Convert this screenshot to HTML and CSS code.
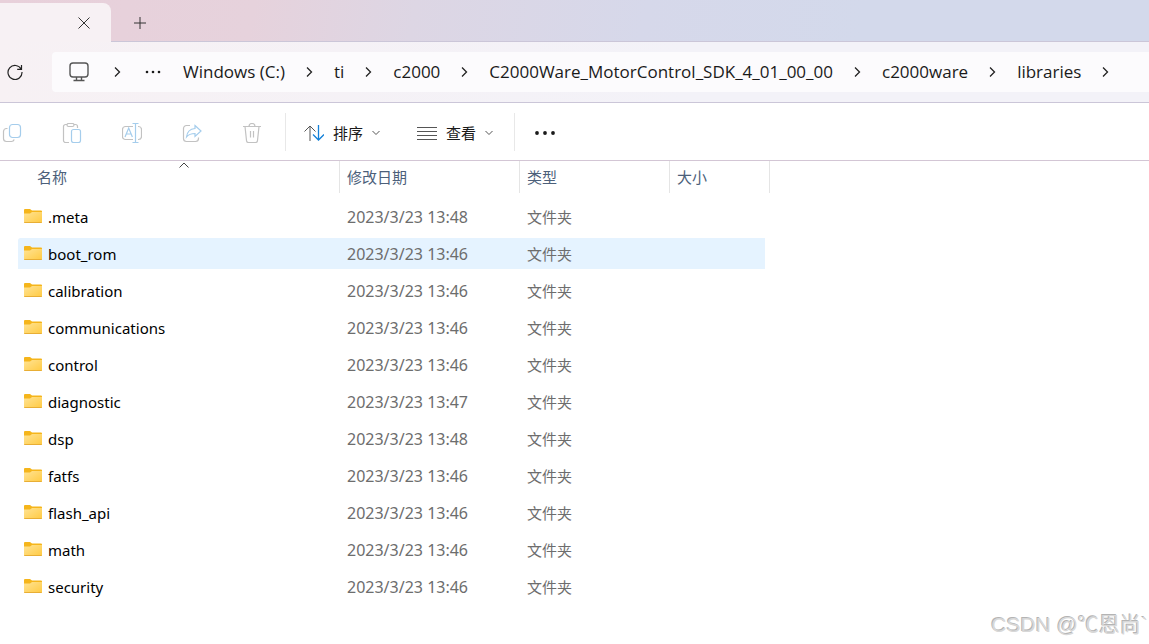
FILE: index.html
```html
<!DOCTYPE html>
<html lang="zh-CN">

<head>
    <meta charset="UTF-8">
    <meta name="viewport" content="width=device-width, initial-scale=1.0">
    <title>libraries</title>
    <link rel="stylesheet" href="styles.css">
</head>

<body>
    <div class="tabs">
        <div class="tab">
            <button class="tab-btn" aria-label="关闭标签页">
                <svg width="12" height="12" viewBox="0 0 12 12"><path d="M.500.500l11 11M11.500.500l-11 11" /></svg>
            </button>
        </div>
        <button class="tab-btn add" aria-label="新建标签页">
            <svg width="12" height="12" viewBox="0 0 12 12"><path d="M6 0v12M0 6h12" /></svg>
        </button>
    </div>

    <div class="nav">
        <button class="refresh" aria-label="刷新">
            <svg width="16" height="16" viewBox="0 0 16 16"><path d="M14.2 5.2A7 7 0 1 0 15 8M14.500 1v4.300h-4.300" /></svg>
        </button>
        <nav class="address">
            <svg class="pc" width="20" height="20" viewBox="0 0 20 20"><rect x="1" y="1" width="18" height="14" rx="3" /><path d="M7.500 15v3M12.500 15v3M4.500 18.500h11" /></svg>
            <svg class="arrow" width="7" height="12" viewBox="0 0 7 12"><path d="M1 1.500L5.500 6 1 10.500" /></svg>
            <button class="more" aria-label="更多位置">
                <svg width="16" height="4" viewBox="0 0 16 4"><circle cx="2" cy="2" r="1.300" /><circle cx="8" cy="2" r="1.300" /><circle cx="14" cy="2" r="1.300" /></svg>
            </button>
            <a href="#">Windows (C:)</a>
            <svg class="arrow" width="7" height="12" viewBox="0 0 7 12"><path d="M1 1.500L5.500 6 1 10.500" /></svg>
            <a href="#">ti</a>
            <svg class="arrow" width="7" height="12" viewBox="0 0 7 12"><path d="M1 1.500L5.500 6 1 10.500" /></svg>
            <a href="#">c2000</a>
            <svg class="arrow" width="7" height="12" viewBox="0 0 7 12"><path d="M1 1.500L5.500 6 1 10.500" /></svg>
            <a href="#">C2000Ware_MotorControl_SDK_4_01_00_00</a>
            <svg class="arrow" width="7" height="12" viewBox="0 0 7 12"><path d="M1 1.500L5.500 6 1 10.500" /></svg>
            <a href="#">c2000ware</a>
            <svg class="arrow" width="7" height="12" viewBox="0 0 7 12"><path d="M1 1.500L5.500 6 1 10.500" /></svg>
            <a href="#">libraries</a>
            <svg class="arrow" width="7" height="12" viewBox="0 0 7 12"><path d="M1 1.500L5.500 6 1 10.500" /></svg>
        </nav>
    </div>

    <div class="toolbar">
        <div class="icons">
            <button disabled aria-label="复制">
                <svg width="20" height="20" viewBox="0 0 20 20"><path class="gray" d="M5.500 5.500H4.500a3 3 0 0 0-3 3v7a3 3 0 0 0 3 3h5a3 3 0 0 0 2.700-2" /><rect class="blue" x="7.500" y="1.500" width="11" height="13" rx="3" /></svg>
            </button>
            <button disabled aria-label="粘贴">
                <svg width="20" height="20" viewBox="0 0 20 20"><path class="gray" d="M7 19.500H3.500a2 2 0 0 1-2-2v-14a2 2 0 0 1 2-2h1.500M12 1.500h1.500a2 2 0 0 1 2 2V5" /><rect class="gray" x="5" y=".500" width="7" height="3" rx="1.500" /><rect class="blue" x="9.500" y="6.500" width="9" height="13" rx="2" /></svg>
            </button>
            <button disabled aria-label="重命名">
                <svg width="20" height="20" viewBox="0 0 20 20"><path class="gray" d="M11 16.500H3.500a3 3 0 0 1-3-3v-7a3 3 0 0 1 3-3H11M16 3.500h.500a3 3 0 0 1 3 3v7a3 3 0 0 1-3 3H16" /><path class="blue" d="M13.500 1v18M10.500.500h6M10.500 19.500h6M3 14l3.700-9 3.700 9M4.300 11h4.800" /></svg>
            </button>
            <button disabled aria-label="共享">
                <svg width="20" height="20" viewBox="0 0 20 20"><path class="gray" d="M8 2.500H4.500a3 3 0 0 0-3 3v10a3 3 0 0 0 3 3h9a3 3 0 0 0 3-3v-1" /><path class="blue" d="M13 2.500l6 5.500-6 5.500v-3c-4 0-6.500 1-8.500 3.500C5 9 8 6 13 5.500z" /></svg>
            </button>
            <button disabled aria-label="删除">
                <svg width="20" height="20" viewBox="0 0 20 20"><path class="gray" d="M1 3.500h18M7 3.500a3 3 0 0 1 6 0M3 3.500l1.500 14a2 2 0 0 0 2 2h7a2 2 0 0 0 2-2l1.500-14M8.500 8v6.500M11.500 8v6.500" /></svg>
            </button>
        </div>
        <button class="menu">
            <svg width="20" height="18" viewBox="0 0 20 18"><path class="dark" d="M6 17V2M.500 7.500L6 2l5.500 5.500" /><path class="accent" d="M14.500 1v15M9 10.500l5.500 5.500 5.500-5.500" /></svg>
            <span>排序</span>
            <svg width="8" height="6" viewBox="0 0 8 6"><path class="dark" d="M.500 1L4 4.500 7.500 1" /></svg>
        </button>
        <button class="menu view">
            <svg width="20" height="14" viewBox="0 0 20 14"><path class="dark" d="M0 1.500h20M0 5.500h20M0 9.500h20M0 13.500h20" /></svg>
            <span>查看</span>
            <svg width="8" height="6" viewBox="0 0 8 6"><path class="dark" d="M.500 1L4 4.500 7.500 1" /></svg>
        </button>
        <button class="dots" aria-label="查看更多">
            <svg width="20" height="4" viewBox="0 0 20 4"><circle cx="2" cy="2" r="1.900" /><circle cx="10" cy="2" r="1.900" /><circle cx="18" cy="2" r="1.900" /></svg>
        </button>
    </div>

    <div class="content">
        <table>
            <colgroup>
                <col class="c-name">
                <col class="c-date">
                <col class="c-type">
                <col class="c-size">
            </colgroup>
            <thead>
                <tr>
                    <th class="sorted">名称
                        <svg width="10" height="6" viewBox="0 0 10 6"><path d="M.500 5.500L5 1l4.500 4.500" /></svg>
                    </th>
                    <th>修改日期</th>
                    <th>类型</th>
                    <th>大小</th>
                </tr>
            </thead>
            <tbody id="list"></tbody>
        </table>
    </div>
    <div class="watermark">CSDN @℃恩尚`</div>

    <script>
        const files = [
            [".meta", "2023/3/23 13:48"],
            ["boot_rom", "2023/3/23 13:46"],
            ["calibration", "2023/3/23 13:46"],
            ["communications", "2023/3/23 13:46"],
            ["control", "2023/3/23 13:46"],
            ["diagnostic", "2023/3/23 13:47"],
            ["dsp", "2023/3/23 13:48"],
            ["fatfs", "2023/3/23 13:46"],
            ["flash_api", "2023/3/23 13:46"],
            ["math", "2023/3/23 13:46"],
            ["security", "2023/3/23 13:46"]
        ]
        // 文件夹图标
        const folder = `<svg width="18" height="16" viewBox="0 0 18 16">
            <defs><linearGradient id="fg" x1="0" y1="0" x2="1" y2="1"><stop offset="0" stop-color="#ffe394"/><stop offset="1" stop-color="#ffca42"/></linearGradient></defs>
            <path fill="#f5b51b" d="M0 1a1 1 0 0 1 1-1h5l2 1.500h9a1 1 0 0 1 1 1V6H0z"/>
            <path fill="url(#fg)" d="M0 4.500h6L8 3h10v10a1 1 0 0 1-1 1H1a1 1 0 0 1-1-1z"/>
            <path fill="#e8ae35" d="M0 13h18a1 1 0 0 1-1 1H1a1 1 0 0 1-1-1z"/>
        </svg>`
        const list = document.getElementById("list")
        files.forEach(([name, date]) => {
            const cls = name === "boot_rom" ? "active" : ""
            list.insertAdjacentHTML("beforeend",
                `<tr class="${cls}"><td><div class="file">${folder}<span>${name}</span></div></td><td class="date">${date}</td><td>文件夹</td><td></td></tr>`)
        })
    </script>
</body>

</html>
```
FILE: styles.css
```css
* {
    margin: 0;
    padding: 0;
    box-sizing: border-box;
}

body {
    min-height: 100vh;
    position: relative;
    overflow-x: hidden;
    background-color: #fff;
    font-family: "Noto Sans", "Noto Sans CJK SC", sans-serif;
    font-size: 15px;
    color: #1a1a1a;
}

button {
    border: none;
    background: none;
    font: inherit;
    color: inherit;
}

svg {
    display: block;
    flex: none;
    fill: none;
}

/* 标签栏 */
.tabs {
    height: 42px;
    padding-top: 3px;
    display: flex;
    background: linear-gradient(100deg, #e8d0da 0%, #e6d2dc 22%, #ddd6e4 36%, #d6d8ea 56%, #d3d9eb 75%);
    border-bottom: 1px solid #cbc6d8;
}

.tab {
    width: 111px;
    height: 39px;
    padding-right: 21px;
    display: flex;
    justify-content: flex-end;
    align-items: center;
    background-color: #f7f1f4;
    border-radius: 0 8px 0 0;
}

.tab-btn svg {
    stroke: #333;
}

.add {
    width: 58px;
    padding-top: 2px;
    display: flex;
    justify-content: center;
    align-items: center;
}

/* 地址栏 */
.nav {
    height: 61px;
    padding: 10px 0 10px 7px;
    display: flex;
    background: linear-gradient(90deg, #f7f1f4, #f3f2f8 60%);
    border-bottom: 1px solid #cbc6d8;
}

.refresh {
    width: 45px;
}

.refresh svg {
    stroke: #222;
    stroke-width: 1.2;
}

.address {
    flex: 1;
    min-width: 0;
    height: 40px;
    padding-left: 17px;
    display: flex;
    align-items: center;
    gap: 21px;
    overflow: hidden;
    background-color: #fcfbfd;
    border-radius: 4px 0 0 4px;
    font-family: "Open Sans", "Noto Sans", sans-serif;
    font-size: 17px;
    line-height: 24px;
    white-space: nowrap;
}

.address a {
    color: #1a1a1a;
    text-decoration: none;
}

.pc {
    margin-right: 4px;
    stroke: #555;
    stroke-width: 1.4;
}

.arrow {
    stroke: #222;
    stroke-width: 1.3;
}

.more {
    margin-left: 3px;
    margin-right: 1px;
}

.more svg,
.dots svg {
    fill: #1a1a1a;
}

/* 工具栏 */
.toolbar {
    height: 58px;
    padding-left: 2px;
    display: flex;
    align-items: center;
    border-bottom: 1px solid #d3c6d5;
}

.icons {
    height: 38px;
    padding-right: 23px;
    display: flex;
    align-items: center;
    gap: 40px;
    border-right: 1px solid #e8e8e8;
}

.gray {
    stroke: #c2c2c2;
}

.blue {
    stroke: #a5cdec;
}

.icons svg {
    stroke-width: 1.2;
}

.dark {
    stroke: #555;
}

.accent {
    stroke: #1480d8;
    stroke-width: 1.3;
}

.icons,
.menu,
.dots {
    padding-top: 2px;
}

.menu {
    height: 38px;
    padding-left: 18px;
    padding-right: 19px;
    display: flex;
    align-items: center;
    gap: 9px;
}

.view {
    padding-right: 21px;
    border-right: 1px solid #e8e8e8;
}

.dots {
    padding-left: 20px;
}

/* 文件列表 */
.content {
    padding-left: 18px;
}

table {
    width: 752px;
    table-layout: fixed;
    border-collapse: separate;
    border-spacing: 0;
}

.c-name {
    width: 322px;
}

.c-date {
    width: 180px;
}

.c-type {
    width: 150px;
}

.c-size {
    width: 100px;
}

th {
    height: 40px;
    padding-left: 7px;
    position: relative;
    border-bottom: 8px solid transparent;
    background: linear-gradient(#e5e5e5, #e5e5e5) right / 1px 100% no-repeat padding-box;
    font-weight: 400;
    line-height: 20px;
    text-align: left;
    color: #4c607a;
}

.sorted {
    padding-left: 19px;
}

/* 排序箭头 */
.sorted svg {
    position: absolute;
    top: 1px;
    left: 50%;
    stroke: #444;
}

td {
    height: 37px;
    padding-left: 7px;
    border-bottom: 6px solid transparent;
    background-clip: padding-box;
    line-height: 20px;
    color: #6d6d6d;
}

td:first-child {
    padding-left: 6px;
}

td:last-child {
    border-right: 5px solid transparent;
}

.date {
    font-size: 16px;
}

.active td {
    background-color: #e5f3ff;
}

.active td:first-child {
    border-radius: 2px 0 0 2px;
}

.file {
    display: flex;
    align-items: center;
    gap: 6px;
    color: #000;
}

.watermark {
    position: absolute;
    right: 1px;
    bottom: 3px;
    font-family: "Liberation Sans", "Noto Sans CJK SC", sans-serif;
    font-size: 21px;
    line-height: 32px;
    color: #d8d8d8;
    text-shadow: -1px -1px 0 #b4b4b4;
}
```
